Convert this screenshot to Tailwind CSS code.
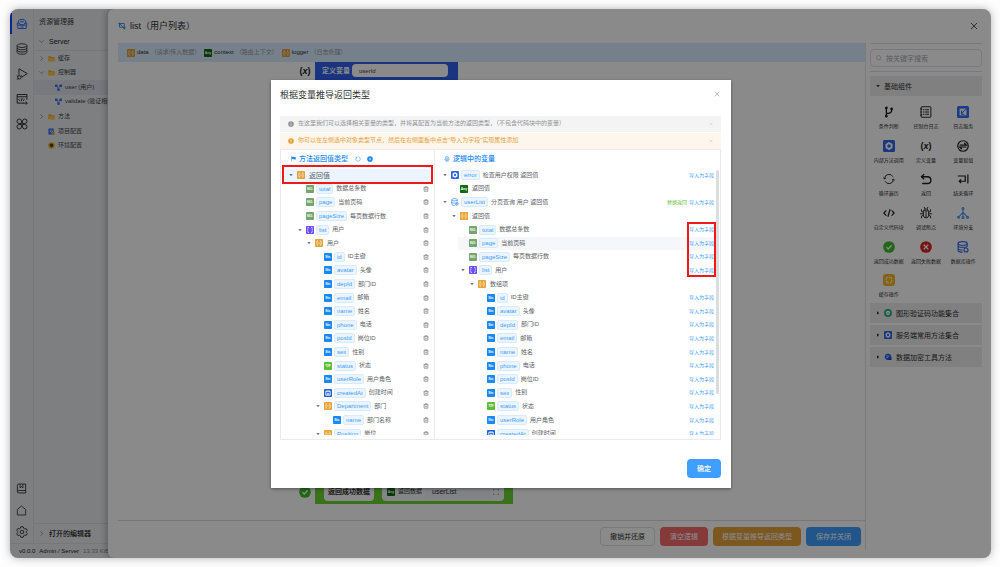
<!DOCTYPE html>
<html lang="zh-CN">
<head>
<meta charset="utf-8">
<title>list（用户列表）</title>
<script src="https://cdn.jsdelivr.net/npm/@tailwindcss/browser@4"></script>
</head>
<body class="bg-[#fdfdfd] font-['Liberation_Sans','Noto_Sans_CJK_SC',sans-serif] text-[6px] leading-[9px] text-[#303133]">

<svg class="hidden" xmlns="http://www.w3.org/2000/svg">
  <symbol id="drawer-box" viewBox="0 0 16 16" fill="none" stroke="currentColor" stroke-width="1.3"><path d="M3 7V4l2-2h6l2 2v3M5 5h6M1.500 7h3l1 2h5l1-2h3v2.500h-13zM2.500 10v4h11v-4M6 12h4"/></symbol>
  <symbol id="database" viewBox="0 0 16 16" fill="none" stroke="currentColor" stroke-width="1.2"><ellipse cx="8" cy="3.500" rx="6.500" ry="2.500"/><path d="M1.500 3.500v9c0 3.300 13 3.300 13 0v-9M1.500 6.500c0 3.300 13 3.300 13 0M1.500 9.500c0 3.300 13 3.300 13 0"/></symbol>
  <symbol id="debug" viewBox="0 0 16 16" fill="none" stroke="currentColor" stroke-width="1.300"><path d="M4 9V1l11 6.500-7 4.500"/><circle cx="4.500" cy="12.500" r="2.300"/><path d="M1 10l2 1.500M1 15l2-1M8 10l-2 1.500"/></symbol>
  <symbol id="code-window" viewBox="0 0 16 16" fill="none" stroke="currentColor" stroke-width="1.300"><path d="M14.500 9V2h-13v11.500H10M1.500 5h13M5 7.500L3.500 9 5 10.500M9.500 7.500L11 9l-1.500 1.500M8 7l-1 4M9 13.500h6M13 11.500l2 2-2 2"/></symbol>
  <symbol id="clover" viewBox="0 0 16 16" fill="none" stroke="currentColor" stroke-width="1.300"><path d="M7.300 7.300H4.200a3 3 0 1 1 3.100-3.100zM8.700 7.300V4.200a3 3 0 1 1 3.100 3.100zM7.300 8.700v3.100a3 3 0 1 1-3.100-3.100zM8.700 8.700h3.100a3 3 0 1 1-3.100 3.100z"/></symbol>
  <symbol id="book" viewBox="0 0 16 16" fill="none" stroke="currentColor" stroke-width="1.300"><path d="M14 11V1.500H4a2 2 0 0 0-2 2v9a2 2 0 0 0 2 2h10V11H4a2 2 0 0 0-2 1.500M6 2v5l2-1.500L10 7V2"/></symbol>
  <symbol id="home" viewBox="0 0 16 16" fill="none" stroke="currentColor" stroke-width="1.200"><path d="M2 6.500l6-5 6 5v8H2z"/></symbol>
  <symbol id="gear" viewBox="0 0 16 16" fill="none" stroke="currentColor" stroke-width="1.200"><path d="M6.500 1h3l.6 2 1.500.9 2-.5 1.500 2.600L13.600 7.500v1l1.500 1.500-1.500 2.600-2-.5-1.500.9-.6 2h-3l-.6-2-1.500-.9-2 .5L.9 10l1.500-1.500v-1L.9 6l1.500-2.600 2 .5L5.900 3z"/><circle cx="8" cy="8" r="2.300"/></symbol>
  <symbol id="chev-down" viewBox="0 0 16 16" fill="none" stroke="currentColor" stroke-width="2"><path d="M1 4.500l7 7 7-7"/></symbol>
  <symbol id="chev-right" viewBox="0 0 16 16" fill="none" stroke="currentColor" stroke-width="2"><path d="M4.500 1l7 7-7 7"/></symbol>
  <symbol id="folder" viewBox="0 0 16 16"><path fill="#f0a71c" d="M1 3h5l2 2h7v9H1z"/><path fill="#ffc445" d="M1 6.500h14V14H1z"/></symbol>
  <symbol id="nodes" viewBox="0 0 16 16"><path d="M3.500 4L8 13l4.500-9M8 8v5" stroke="#3370ff" stroke-width="1.500" fill="none"/><rect x="0" y="1" width="6" height="6" rx="1" fill="#3370ff"/><rect x="10" y="1" width="6" height="6" rx="1" fill="#3370ff"/><circle cx="8" cy="8" r="2.300" fill="#f5b12a"/><circle cx="8" cy="13" r="3" fill="#3370ff"/></symbol>
  <symbol id="config" viewBox="0 0 16 16"><rect x="1" y="1" width="12" height="14" rx="1" fill="#2f6cf6"/><path d="M4 5h6M4 8h4" stroke="#fff" stroke-width="1.500"/><circle cx="12" cy="12" r="3.500" fill="#f5a623"/><path d="M7 12l4-5" stroke="#fff" stroke-width="1.500"/></symbol>
  <symbol id="env" viewBox="0 0 16 16"><circle cx="8" cy="8" r="7.500" fill="#f5b41c"/><path d="M4 5l4-1.500L12 5v4l-4 3.500L4 9z" fill="#4a4430"/></symbol>
  <symbol id="crop" viewBox="0 0 16 16" fill="none" stroke-width="1.800"><path stroke="#2f8fe8" d="M1 3h11.500v7M3 1v9.500h8M3 3l8 8"/><path stroke="#2b9c8f" d="M12.500 9v6M10 12h6"/></symbol>
  <symbol id="close" viewBox="0 0 16 16" fill="none" stroke="currentColor" stroke-width="1.600"><path d="M2 2l12 12M14 2L2 14"/></symbol>
  <symbol id="search" viewBox="0 0 16 16" fill="none" stroke="currentColor" stroke-width="1.400"><circle cx="7" cy="7" r="5.500"/><path d="M11 11l4 4"/></symbol>
  <symbol id="tri-down" viewBox="0 0 16 16"><path fill="currentColor" d="M1 4h14l-7 9z"/></symbol>
  <symbol id="tri-right" viewBox="0 0 16 16"><path fill="currentColor" d="M4 1v14l9-7z"/></symbol>
  <symbol id="t-obj" viewBox="0 0 16 16"><rect width="16" height="16" rx="1.500" fill="#e6a23c"/><path fill="none" stroke="#fff" stroke-width="1.300" d="M5.500 3.500H4.300V7L3 8l1.300 1v3.500h1.200M10.500 3.500h1.200V7L13 8l-1.300 1v3.500h-1.200M6.500 8h3"/></symbol>
  <symbol id="t-arr" viewBox="0 0 16 16"><rect width="16" height="16" rx="1.500" fill="#6a4dfb"/><path fill="none" stroke="#fff" stroke-width="1.400" stroke-dasharray="3 1.200" d="M6 3H3.500v10H6M10 3h2.500v10H10"/></symbol>
  <symbol id="t-num" viewBox="0 0 16 16"><rect width="16" height="16" rx="1.500" fill="#74a66c"/><text x="8" y="10.500" font-size="7" font-weight="700" text-anchor="middle" fill="#fff">NO.</text></symbol>
  <symbol id="t-str" viewBox="0 0 16 16"><rect width="16" height="16" rx="1.500" fill="#1989fa"/><text x="8" y="10.500" font-size="7" font-weight="700" text-anchor="middle" fill="#fff">Str.</text></symbol>
  <symbol id="t-bool" viewBox="0 0 16 16"><rect width="16" height="16" rx="1.500" fill="#5fbe35"/><text x="8" y="10.500" font-size="7" font-weight="700" text-anchor="middle" fill="#fff">T/F</text></symbol>
  <symbol id="t-any" viewBox="0 0 16 16"><rect width="16" height="16" rx="1.500" fill="#0f6a12"/><text x="8" y="10.500" font-size="7" font-weight="700" text-anchor="middle" fill="#fff">Any</text></symbol>
  <symbol id="t-date" viewBox="0 0 16 16"><rect width="16" height="16" rx="1.500" fill="#1f62d6"/><path fill="none" stroke="#fff" stroke-width="1.600" d="M3.500 4.500h9v8h-9zM6 2.500v3M10 2.500v3M6.500 12V8.500h3V12"/></symbol>
  <symbol id="t-fn" viewBox="0 0 16 16"><rect width="16" height="16" rx="2" fill="#2f66e8"/><path fill="#fff" d="M8 2.500l4.700 2.700v5.600L8 13.500l-4.700-2.700V5.200z"/><circle cx="8" cy="8" r="2.300" fill="#2f66e8"/></symbol>
  <symbol id="t-query" viewBox="0 0 16 16" fill="none" stroke="#3f8cf5" stroke-width="1.500"><ellipse cx="7" cy="3.500" rx="5.500" ry="2.300"/><path d="M1.500 3.500v9c0 2 3 2.500 6 2.500M12.500 3.500V7M1.500 8c0 2 3 2.500 6 2"/><circle cx="11.500" cy="11.500" r="3"/><path d="M11.500 10v3M10 11.500h3"/></symbol>
  <symbol id="trash" viewBox="0 0 16 16" fill="none" stroke="currentColor" stroke-width="1.500"><path d="M1.500 4.500h13M5 4V2h6v2M3 4.500V14h10V4.500M6.200 7.500v4M9.800 7.500v4"/></symbol>
  <symbol id="flag" viewBox="0 0 16 16"><path fill="currentColor" d="M1 1h2v14H1zM3 2h5l1 1.500h6V11H9L8 9.500H3z"/></symbol>
  <symbol id="refresh" viewBox="0 0 16 16" fill="none" stroke="currentColor" stroke-width="1.300"><path d="M4 3.500A6 6 0 1 0 9 2M1.500 3H5v3.500"/></symbol>
  <symbol id="plus-dot" viewBox="0 0 16 16"><circle cx="8" cy="8" r="7.500" fill="currentColor"/><path d="M8 5v6M5 8h6" stroke="#fff" stroke-width="1.500"/></symbol>
  <symbol id="coin" viewBox="0 0 16 16" fill="none" stroke="currentColor" stroke-width="1.300"><circle cx="8" cy="6" r="4.700"/><path d="M1.500 8.500l2 3h9l2-3M4 14h8M6 5h4M6 7h4"/></symbol>
  <symbol id="info" viewBox="0 0 16 16"><circle cx="8" cy="8" r="7.500" fill="currentColor"/><path d="M8 7v5M8 4v1.500" stroke="#fff" stroke-width="1.800"/></symbol>
  <symbol id="warn" viewBox="0 0 16 16"><circle cx="8" cy="8" r="7.500" fill="currentColor"/><path d="M8 4v5M8 10.500V12" stroke="#fff" stroke-width="1.800"/></symbol>
  <symbol id="ok" viewBox="0 0 16 16"><circle cx="8" cy="8" r="7.800" fill="#3fbf2a"/><path d="M4.500 8.200l2.500 2.500 4.500-5" stroke="#fff" stroke-width="1.600" fill="none"/></symbol>
  <symbol id="fail" viewBox="0 0 16 16"><circle cx="8" cy="8" r="7.800" fill="#dc2626"/><path d="M5 5l6 6M11 5l-6 6" stroke="#fff" stroke-width="1.600"/></symbol>
  <symbol id="branch" viewBox="0 0 16 16" fill="none" stroke="#1c1c1c" stroke-width="1.700"><path d="M4.500 3v10M4.500 10c4 0 7-1 7-4V4"/><circle cx="4.500" cy="2.500" r="1" /><circle cx="4.500" cy="13.500" r="1"/><circle cx="11.500" cy="4" r="1"/></symbol>
  <symbol id="log" viewBox="0 0 16 16" fill="none" stroke="#222" stroke-width="1.300"><rect x="1.500" y="1" width="13" height="14" rx="1"/><path d="M4 5h2M7 5h5M4 8h2M7 8h5M4 11h2M7 11h5M0 4h3M0 8h2M0 12h3"/></symbol>
  <symbol id="log-svc" viewBox="0 0 16 16"><rect width="16" height="16" rx="2" fill="#3370f5"/><rect x="3.500" y="3.500" width="9" height="9" fill="#fff"/><path d="M6 10l6-6M6 6v5h4" stroke="#3370f5" stroke-width="1.400" fill="none"/></symbol>
  <symbol id="var" viewBox="0 0 16 16"><text x="8" y="12" font-size="12" font-weight="700" text-anchor="middle" fill="#1c1c1c">(<tspan font-style="italic">x</tspan>)</text></symbol>
  <symbol id="assign" viewBox="0 0 16 16" fill="none" stroke="#1c1c1c" stroke-width="1.600"><circle cx="8" cy="8" r="7"/><path d="M3.500 6.700h9L9.500 4M12.500 9.300h-9l3 2.700"/></symbol>
  <symbol id="loop" viewBox="0 0 16 16" fill="none" stroke="#222" stroke-width="1.200"><path d="M2 7.500a6 6 0 0 1 11.300-2.500M14 8.500a6 6 0 0 1-11.300 2.500M.5 6l1.500 2 2-1.500M12 9.500l2-1.500 1.500 2"/></symbol>
  <symbol id="return" viewBox="0 0 16 16" fill="none" stroke="#1c1c1c" stroke-width="1.800"><path d="M5.500 1.500L2 5l3.500 3.500M2 5h8a4.500 4.500 0 0 1 0 9H3"/></symbol>
  <symbol id="end-loop" viewBox="0 0 16 16" fill="none" stroke="#1c1c1c" stroke-width="1.600"><path d="M14.500 2v12M1 4h10v7H3M5.500 8.500L3 11l2.500 2.500"/></symbol>
  <symbol id="code" viewBox="0 0 16 16" fill="none" stroke="#1c1c1c" stroke-width="1.600"><path d="M4.500 4.500L1 8l3.500 3.500M11.500 4.500L15 8l-3.500 3.500M9.500 3l-3 10"/></symbol>
  <symbol id="bug" viewBox="0 0 16 16" fill="none" stroke="#222" stroke-width="1.200"><path d="M4.500 5h7v6a3.500 3.500 0 0 1-7 0zM5.500 5a2.500 2.500 0 0 1 5 0M8 6v8M2 3v3l2.500 1M14 3v3l-2.500 1M0 9h4.500M16 9h-4.500M2 15v-3l2.500-1M14 15v-3l-2.500-1M5.500 0l1 2.500M10.500 0l-1 2.500"/></symbol>
  <symbol id="split" viewBox="0 0 16 16" fill="none" stroke="#3b8ff0" stroke-width="1.400"><path d="M8 3v10M8 7L3 12.500M8 7l5 5.500"/><circle cx="8" cy="2" r="1.300"/><circle cx="2" cy="13.500" r="1.300"/><circle cx="8" cy="14" r="1.300"/><circle cx="14" cy="13.500" r="1.300"/></symbol>
  <symbol id="db-op" viewBox="0 0 16 16" fill="none" stroke="#2f66e8" stroke-width="1.500"><ellipse cx="7.500" cy="3.200" rx="6" ry="2.400"/><path d="M1.500 3.200v9.500c0 1.500 3 2.300 6 2.300M13.500 3.200V8M1.500 6.500c0 2.500 12 2.500 12 0M1.500 10c0 1.500 3 2 6 2"/><circle cx="12" cy="12" r="2.700"/></symbol>
  <symbol id="cache" viewBox="0 0 16 16"><rect width="16" height="16" rx="4" fill="#f5b81c"/><circle cx="8" cy="8" r="4" fill="none" stroke="#fff" stroke-width="1.400" stroke-dasharray="5 1.200"/></symbol>
  <symbol id="shield" viewBox="0 0 16 16"><circle cx="8" cy="8" r="7.800" fill="#26a87a"/><path d="M8 3.500l4 1.300v3.700c0 2-2 3.300-4 4-2-.7-4-2-4-4V4.800z" fill="#fff"/><circle cx="8" cy="8" r="1.500" fill="#26a87a"/></symbol>
  <symbol id="lock" viewBox="0 0 16 16"><path d="M3 3l5-2 5 2 2 5-3 6H5L1 9z" fill="#2f66e8"/><path d="M5 6h5M5 9h4" stroke="#fff" stroke-width="1.300"/><rect x="9" y="9" width="6" height="5" fill="#1546b5"/></symbol>
  <symbol id="expand" viewBox="0 0 16 16" fill="none" stroke="currentColor" stroke-width="1.600"><path d="M1 5V1h4M11 1h4v4M15 11v4h-4M5 15H1v-4"/></symbol>
</svg>

<div class="h-screen py-[9px] pr-[9px] pl-[10px]">
<div class="relative flex h-full flex-col overflow-hidden rounded-lg bg-[#e9ebee] shadow-[0_0_8px_rgba(0,0,0,0.3)]">
  <div class="flex min-h-0 flex-1">

    <!-- workbench behind the drawer -->
    <div class="flex w-[98px] shrink-0 flex-col overflow-hidden">
      <div class="flex min-h-0 flex-1">
        <nav class="flex w-6 shrink-0 flex-col items-center border-r border-[#dcdee2] text-[#333]">
          <button class="mt-1 flex h-[21px] w-full items-center justify-center border-l-2 border-l-[#1546ff] pr-[1px] text-[#2f6cf6]" aria-label="资源管理器"><svg class="size-3"><use href="#drawer-box"/></svg></button>
          <button class="mt-1 flex h-[21px] items-center" aria-label="数据库"><svg class="size-3"><use href="#database"/></svg></button>
          <button class="mt-1 flex h-[21px] items-center" aria-label="调试"><svg class="size-3"><use href="#debug"/></svg></button>
          <button class="mt-1 flex h-[21px] items-center" aria-label="接口"><svg class="size-3"><use href="#code-window"/></svg></button>
          <button class="mt-1 flex h-[21px] items-center" aria-label="插件"><svg class="size-3"><use href="#clover"/></svg></button>
          <span class="flex-1"></span>
          <button class="flex h-[22px] items-center" aria-label="文档"><svg class="size-[11px]"><use href="#book"/></svg></button>
          <button class="flex h-[22px] items-center" aria-label="主页"><svg class="size-[11px]"><use href="#home"/></svg></button>
          <button class="flex h-[22px] items-center" aria-label="设置"><svg class="size-3"><use href="#gear"/></svg></button>
        </nav>
        <aside class="flex min-w-0 flex-1 flex-col whitespace-nowrap text-[#444]">
          <h2 class="flex h-6 items-center pl-[5px] text-[7px]">资源管理器</h2>
          <div class="flex h-[18px] items-center gap-[5px] border-b border-[#dadce0] pl-[5px] text-[7px] font-medium text-[#222]"><svg class="size-[5px] text-[#777]"><use href="#chev-down"/></svg>Server</div>
          <ul id="files" class="grid h-[102px] auto-rows-fr"></ul>
          <span class="flex-1"></span>
          <div class="flex h-5 items-center gap-[5px] border-t border-[#d8dade] pl-[5px] text-[7px] font-medium text-[#222]"><svg class="size-[5px] text-[#777]"><use href="#chev-right"/></svg>打开的编辑器</div>
        </aside>
      </div>
      <footer class="flex h-[15px] items-center gap-1 border-t border-[#dadce0] pl-[9px] whitespace-nowrap text-[#222]"><span>v0.0.0</span><span>Admin / Server</span><span class="text-[#888]">13.33 KiB</span></footer>
    </div>

    <!-- drawer -->
    <section class="flex min-w-0 flex-1 flex-col rounded-l-md bg-white pl-[10px] shadow-[-2px_0_6px_rgba(0,0,0,0.25)]">
      <header class="flex h-[34px] shrink-0 items-center gap-1 pr-[13px]">
        <svg class="size-2"><use href="#crop"/></svg>
        <h1 class="flex-1 text-[9px] leading-[13px]">list（用户列表）</h1>
        <button aria-label="关闭"><svg class="size-2"><use href="#close"/></svg></button>
      </header>
      <div class="flex min-h-0 flex-1 pb-2">
        <main class="flex min-w-0 flex-1 flex-col border-r border-[#e2e2e2]">
          <div class="flex h-[19px] shrink-0 items-center gap-1 bg-[#d9ecff] pl-[9px] font-medium">
            <span class="flex items-center gap-[2px]"><svg class="size-2"><use href="#t-obj"/></svg>data<span class="font-normal text-[#999]">（请求/传入数据）</span></span>
            <span class="flex items-center gap-[2px]"><svg class="size-2"><use href="#t-any"/></svg>context<span class="font-normal text-[#999]">（路由上下文）</span></span>
            <span class="flex items-center gap-[2px]"><svg class="size-2"><use href="#t-obj"/></svg>logger<span class="font-normal text-[#999]">（日志处理）</span></span>
          </div>
          <div class="flex min-h-0 flex-1 flex-col justify-between pb-4 pl-[181px]">
            <div class="flex items-start gap-1">
              <svg class="mt-[3px] size-3"><use href="#var"/></svg>
              <label class="flex h-[22px] w-[143px] items-start gap-[2px] bg-[#3161f0] pt-[2px] pl-[7px] text-[7px] font-bold text-white"><span class="leading-[13px]">定义变量</span><input class="h-[13px] w-24 rounded-sm bg-white px-[7px] text-[6px] font-normal text-[#444]" value="userId"></label>
            </div>
            <div class="flex items-center gap-1">
              <svg class="size-3"><use href="#ok"/></svg>
              <div class="flex h-[25px] w-[198px] items-center gap-2 bg-[#69d332] px-[9px] text-[#333]">
                <span class="flex h-[19px] items-center rounded-sm bg-white px-1 text-[7px] font-bold">返回成功数据</span>
                <label class="flex h-[19px] min-w-0 flex-1 items-center gap-[3px] rounded-sm bg-[#f4f6f8] px-[5px]"><svg class="size-2 shrink-0"><use href="#t-any"/></svg><span class="shrink-0">返回数据</span><input class="h-3 min-w-0 flex-1 bg-[#eef1f6] pl-[7px] text-[7px]" value="userList"><svg class="size-[6px] shrink-0 text-[#888]"><use href="#expand"/></svg></label>
              </div>
            </div>
          </div>
          <div class="flex h-[30px] shrink-0 items-center justify-end gap-[5px] border-t border-[#dcdcdc] pr-1 pt-[2px] text-[7px] text-white">
            <button class="h-[19px] rounded-sm border border-[#dcdfe6] px-[9px] text-[#333]">撤销并还原</button>
            <button class="h-[19px] rounded-sm bg-[#f56c6c] px-[10px]">清空逻辑</button>
            <button class="h-[19px] rounded-sm bg-[#e6a23c] px-[9px]">根据变量推导返回类型</button>
            <button class="h-[19px] rounded-sm bg-[#409eff] px-[10px]">保存并关闭</button>
          </div>
        </main>
        <aside class="mr-[9px] ml-1 flex w-28 shrink-0 flex-col border-t border-[#dcdfe6]">
          <label class="mt-[5px] flex h-[18px] shrink-0 items-center gap-1 rounded-sm border border-[#dcdfe6] px-[5px] text-[#a8abb2]"><svg class="size-[6px]"><use href="#search"/></svg><input class="min-w-0 flex-1 text-[7px] placeholder:text-[#a8abb2]" placeholder="按关键字搜索" aria-label="搜索"></label>
          <div class="mt-1 mb-1 border-t border-[#dcdfe6]"></div>
          <button class="flex h-[20px] shrink-0 items-center gap-1 bg-[#ececec] pl-[6px] text-[7px]"><svg class="size-1"><use href="#tri-down"/></svg>基础组件</button>
          <ul id="palette" class="grid h-[207px] shrink-0 auto-rows-fr grid-cols-3 pt-[5px]"></ul>
          <div id="groups" class="flex flex-col gap-[2px] text-[7px]"></div>
        </aside>
      </div>
    </section>
  </div>

  <!-- modal -->
  <div class="absolute inset-0 flex items-center justify-center bg-black/46 pl-[1px]">
    <div role="dialog" aria-labelledby="dlg" class="flex w-[460px] flex-col bg-white pt-0 pr-[10px] pb-[10px] pl-[9px] shadow-[0_1px_3px_rgba(0,0,0,0.4)]">
      <header class="flex h-[36px] items-start justify-between pt-[9px] pr-[1px]">
        <h2 id="dlg" class="text-[9px] leading-[13px]">根据变量推导返回类型</h2>
        <button class="mt-[2px] text-[#909399]" aria-label="关闭"><svg class="size-[6px]"><use href="#close"/></svg></button>
      </header>
      <div class="mb-[1px] flex h-4 items-center gap-1 bg-[#f4f4f5] px-2 text-[#909399]"><svg class="size-[6px]"><use href="#info"/></svg><p class="flex-1">在这里我们可以选择相关变量的类型，并将其配置为当前方法的返回类型，（不包含代码块中的变量）</p><button class="text-[#c0c4cc]" aria-label="关闭提示"><svg class="size-1"><use href="#close"/></svg></button></div>
      <div class="flex h-4 items-center gap-1 bg-[#fdf6ec] px-2 text-[#e6a23c]"><svg class="size-[6px]"><use href="#warn"/></svg><p class="flex-1">你可以在左侧选中对象类型节点，然后在右侧面板中点击"导入为字段"实现属性添加</p><button class="text-[#c0c4cc]" aria-label="关闭提示"><svg class="size-1"><use href="#close"/></svg></button></div>
      <div class="flex border border-[#e9ebf0] pb-1">
        <section class="-mb-1 w-[154px] shrink-0 border-r border-[#e9ebf0] pb-1">
          <h3 class="flex h-[15px] items-center gap-[3px] pt-[3px] pl-[10px] text-[7px] font-medium text-[#1989fa]"><svg class="size-[5px]"><use href="#flag"/></svg>方法返回值类型<button class="ml-1" aria-label="刷新"><svg class="size-[6px]"><use href="#refresh"/></svg></button><button class="ml-[3px]" aria-label="添加"><svg class="size-[6px]"><use href="#plus-dot"/></svg></button></h3>
          <div class="h-[270px] overflow-hidden px-1 pt-1"><ul id="left" class="grid h-[272px] auto-rows-fr"></ul></div>
        </section>
        <section class="relative min-w-0 flex-1">
          <h3 class="flex h-[15px] items-center gap-[3px] pt-[3px] pl-[9px] text-[7px] font-medium text-[#1989fa]"><svg class="size-[6px]"><use href="#coin"/></svg>逻辑中的变量</h3>
          <div class="h-[270px] overflow-hidden pt-1 pr-1 pl-1"><ul id="right" class="grid h-[272px] auto-rows-fr"></ul></div>
          <span class="absolute top-[20px] right-[1px] h-[224px] w-[3px] rounded-full bg-[#dcdde0]"></span>
          <span class="absolute top-[72px] right-1 h-[55px] w-[29px] border-2 border-[#f01818]"></span>
        </section>
      </div>
      <footer class="flex justify-end pt-[19px]"><button class="h-[19px] rounded-sm bg-[#409eff] px-[10px] text-[7px] font-medium text-white">确定</button></footer>
    </div>
  </div>
</div>
</div>

<script>
const icon = (n, c) => `<svg class="${c}"><use href="#${n}"/></svg>`;
const fill = (id, rows, fn) => document.getElementById(id).innerHTML = rows.map(fn).join('');

// [expander, icon, label, depth]
fill('files', [
  ['chev-right','folder','缓存'],['chev-down','folder','控制器'],['','nodes','user (用户)',1],['','nodes','validate (验证相关)',1],
  ['chev-right','folder','方法'],['','config','项目配置'],['','env','环境配置']
], ([x,i,t,d], n) => `<li class="flex items-center gap-[3px] ${d ? 'pl-[12px]' : 'pl-[5px]'} ${n === 2 ? 'bg-[#dcdfe9]' : ''}">
  ${x ? icon(x,'size-[5px] mr-[1px] shrink-0 text-[#777]') : '<span class="size-[5px] mr-[1px] shrink-0"></span>'}${icon(i,'size-[7px] shrink-0')}<span>${t}</span></li>`);

fill('palette', [
  ['branch','条件判断'],['log','控制台日志'],['log-svc','日志服务'],['t-fn','内部方法调用'],['var','定义变量'],['assign','变量赋值'],
  ['loop','循环遍历'],['return','返回'],['end-loop','结束循环'],['code','自定义代码块'],['bug','调试断点'],['split','环境分支'],
  ['ok','返回成功数据'],['fail','返回失败数据'],['db-op','数据库操作'],['cache','缓存操作']
], ([i,t]) => `<li class="flex flex-col items-center gap-[5px] pt-[5px] text-[5px] leading-[7px] whitespace-nowrap">${icon(i,'size-3')}<span>${t}</span></li>`);

fill('groups', [['shield','图形验证码功能集合'],['t-fn','服务端常用方法集合'],['lock','数据加密工具方法']],
  ([i,t]) => `<button class="flex h-[20px] items-center gap-1 bg-[#ececec] pl-[6px]">${icon('tri-right','size-1')}${icon(i,'size-2')}${t}</button>`);

// [depth, expandable, type icon, field name, caption]
const fields = [['t-str','id','ID主键'],['t-str','avatar','头像'],['t-str','depId','部门ID'],['t-str','email','邮箱'],['t-str','name','姓名'],
  ['t-str','phone','电话'],['t-str','posId','岗位ID'],['t-str','sex','性别'],['t-bool','status','状态'],['t-str','userRole','用户角色'],['t-date','createdAt','创建时间']];
const pads = ['pl-1','pl-[13px]','pl-[22px]','pl-[31px]','pl-[40px]'];
const node = (x, i, name, cap) => `${x ? icon('tri-down','size-1 mr-[2px] shrink-0 text-[#777]') : '<span class="size-1 mr-[2px] shrink-0"></span>'}${icon(i,'size-2 shrink-0')}
  ${name ? `<span class="mr-[1px] rounded-xs border border-[#d9ecff] bg-[#ecf5ff] px-[2px] leading-[8px] text-[#409eff]">${name}</span>` : '<span></span>'}<span class="text-[#606266]">${cap}</span>`;

fill('left', [[0,1,'t-obj','','返回值'],[1,0,'t-num','total','数据总条数'],[1,0,'t-num','page','当前页码'],[1,0,'t-num','pageSize','每页数据行数'],
  [1,1,'t-arr','list','用户'],[2,1,'t-obj','','用户'],...fields.map(f => [3,0,...f]),[3,1,'t-obj','Department','部门'],[4,0,'t-str','name','部门名称'],[3,1,'t-obj','Position','岗位']
], ([d,x,i,name,cap], n) => `<li class="relative flex items-center gap-[2px] pr-[1px] ${pads[d]} ${n ? '' : 'bg-[#ecf5ff] text-[7px]'}">${node(x,i,name,cap)}
  ${n ? `<button class="ml-auto text-[#606266]" aria-label="删除">${icon('trash','size-[6px]')}</button>` : '<span class="absolute -inset-x-[3px] -top-1 -bottom-[2px] border-2 border-[#f01818]"></span>'}</li>`);

fill('right', [[0,1,'t-fn','error','检查用户权限 返回值'],[1,0,'t-any','','返回值'],[0,1,'t-query','userList','分页查询 用户 返回值'],[1,1,'t-obj','','返回值'],
  [2,0,'t-num','total','数据总条数'],[2,0,'t-num','page','当前页码'],[2,0,'t-num','pageSize','每页数据行数'],[2,1,'t-arr','list','用户'],[3,1,'t-obj','','数组项'],
  ...fields.map(f => [4,0,...f])
], ([d,x,i,name,cap], n) => `<li class="flex items-center gap-[2px] pr-[2px] ${pads[d]} ${n === 5 ? 'bg-linear-to-r from-transparent from-7% to-[#f5f7fa] to-7%' : ''}">${node(x,i,name,cap)}
  <span class="ml-auto flex gap-[2px] text-[5px]">${n === 2 ? '<button class="text-[#67c23a]">替换返回</button>' : ''}${name ? '<button class="text-[#409eff]">导入为字段</button>' : ''}</span></li>`);
</script>
</body>
</html>
